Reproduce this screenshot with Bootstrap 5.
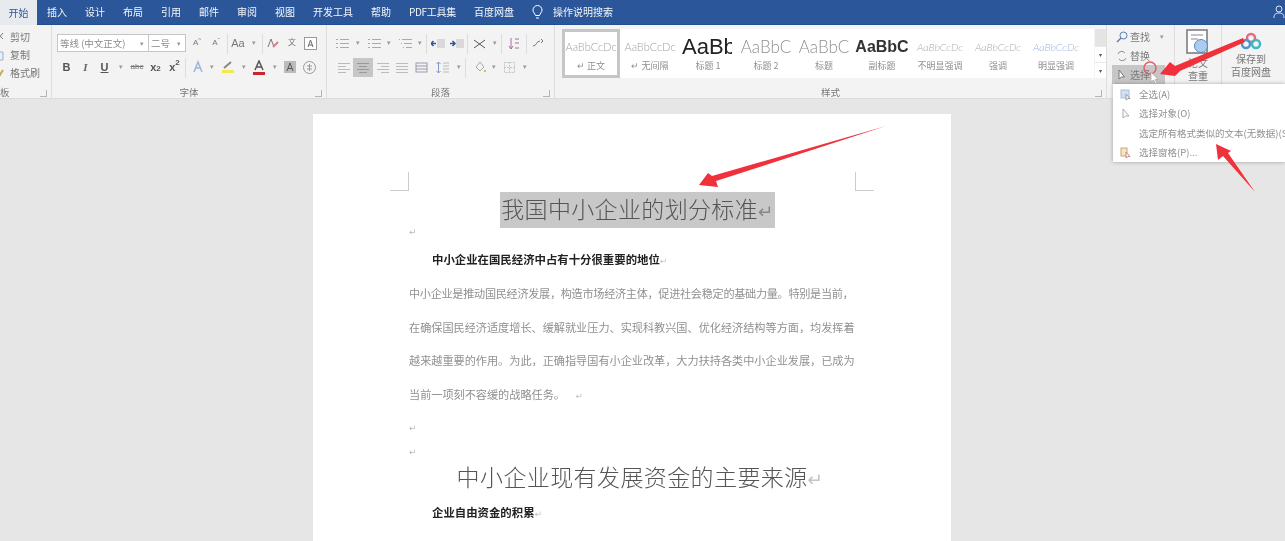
<!DOCTYPE html>
<html lang="zh-CN">
  <head>
    <meta charset="UTF-8" />
    <meta name="viewport" content="width=device-width, initial-scale=1" />
    <title>Word</title>
    <link href="https://cdn.jsdelivr.net/npm/bootstrap@5.3.0/dist/css/bootstrap.min.css" rel="stylesheet" />
    <style>
      html, body { height: 541px; overflow: hidden; }
      body { background: #e6e6e6; font-family: "Noto Sans CJK SC", "Liberation Sans", sans-serif; font-size: 10px; color: #666; position: relative; }
      /* the reference is a soft video frame */
      .tabbar, .ribbon, .docpage, .selmenu { filter: blur(.35px); }

      /* title bar + tabs */
      .tabbar { height: 25px; background: #2b579a; border-bottom: 1px solid #1d4f91; color: #fff; }
      .tabitem { margin-right: 18px; white-space: nowrap; line-height: 24px; opacity: .95; }
      .tabitem-on { width: 37px; height: 25px; background: #f3f3f3; color: #2b579a; text-align: center; line-height: 26px; margin-right: 10px; }
      .tab-tight { letter-spacing: -.3px; }
      .tabbulb { margin: 0 10px 0 0; }
      .tabuser { right: 0; top: 5px; }

      /* ribbon */
      .ribbon { height: 74px; background: #f3f3f3; border-bottom: 1px solid #dcdcdc; }
      .rgroup { border-right: 1px solid #dedede; flex: none; position: relative; }
      .rg-clip { width: 52px; }
      .rg-font { width: 275px; padding-left: 5px; }
      .rg-para { width: 228px; padding-left: 5px; }
      .rg-style { width: 552px; padding-left: 7px; }
      .rg-edit { width: 68px; }
      .rg-check { width: 47px; }
      .rg-disk { width: 58px; border-right: 0; }
      .rlabel { position: absolute; left: 0; right: 0; top: 60px; text-align: center; color: #777; font-size: 9.5px; line-height: 14px; }
      .rexpand { position: absolute; right: 4px; top: 65px; width: 7px; height: 7px; border: 1px solid #b5b5b5; border-top: 0; border-left: 0; }

      .cliprow { height: 18px; line-height: 18px; white-space: nowrap; color: #777; margin-left: -3px; }
      .clipstack { padding-top: 3px; }
      .rrow { height: 18px; }
      .rrow-a { margin-top: 9px; }
      .rrow-b { margin-top: 6px; }
      .combo { height: 18px; background: #fff; border: 1px solid #c6c6c6; color: #8a8a8a; font-size: 9.5px; line-height: 16px; padding-left: 2px; white-space: nowrap; position: relative; }
      .combo-font { width: 92px; }
      .combo-size { width: 38px; margin-left: -1px; }
      .combo-arrow { position: absolute; right: 4px; top: 0; }
      .tb { flex: none; height: 18px; line-height: 18px; text-align: center; color: #777; font-size: 11px; font-family: "Liberation Sans", sans-serif; display: flex; align-items: center; justify-content: center; }
      .tb-10 { width: 10px; } .tb-11 { width: 11px; } .tb-14 { width: 14px; } .tb-16 { width: 16px; } .tb-18 { width: 18px; }
      .tb-19 { width: 19px; } .tb-20 { width: 20px; } .tb-22 { width: 22px; }
      .tb-caret { font-size: 7px; color: #999; }
      .tbbold { font-weight: 700; color: #555; }
      .tbital { font-style: italic; font-weight: 700; color: #666; font-family: "Liberation Serif", serif; }
      .tbsmall { font-size: 8px; }
      .tbdiv { flex: none; width: 1px; height: 20px; background: #dcdcdc; margin: 0 1px; }
      .tb-active { background: #c6c6c6; height: 19px; }
      .spacer-2 { flex: none; width: 2px; }

      /* style gallery */
      .gallery { margin-top: 4px; height: 49px; width: 535px; background: #fff; }
      .gitem { flex: none; width: 58px; height: 49px; text-align: center; overflow: hidden; padding-top: 5px; white-space: nowrap; }
      .gitem-on { border: 3px solid #c6c6c6; padding-top: 2px; margin-right: 1px; }
      .gprev { height: 26px; line-height: 26px; font-family: Lato, "Liberation Sans", sans-serif; font-size: 11px; font-weight: 300; color: #a2a2a2; overflow: hidden; }
      .gname { font-size: 9px; line-height: 12px; color: #8f8f8f; }
      .gp-h1 { font-family: "Liberation Sans", sans-serif; font-weight: 400; font-size: 22px; color: #222; margin-left: 3px; width: 50px; text-align: left; }
      .gp-h2 { font-size: 17px; color: #909090; }
      .gp-sub { font-family: "Liberation Sans", sans-serif; font-size: 16px; color: #333; font-weight: 700; }
      .gp-em { font-style: italic; font-size: 10.5px; color: #aaa; }
      .gp-blue { font-style: italic; font-size: 10.5px; color: #9db4dc; }
      .gscroll { width: 11px; flex: none; margin-left: 1px; }
      .gscroll-top { height: 17px; background: #e4e4e4; }
      .gscroll-btn { height: 16px; background: #fff; border-top: 1px solid #e8e8e8; font-size: 6px; line-height: 15px; text-align: center; color: #555; }

      /* editing */
      .editrow { height: 19px; line-height: 19px; color: #777; margin-left: 5px; width: 53px; padding-left: 4px; white-space: nowrap; gap: 2px; }
      .editrow-on { background: #c6c6c6; }
      .editstack { padding-top: 2px; }
      .bigtext { text-align: center; line-height: 13px; color: #777; font-size: 10px; }
      .diskicon { margin: 7px 0 2px; }

      /* document */
      .docpage { width: 638px; margin: 15px 0 0 313px; height: 427px; overflow: hidden; background: #fff; padding: 78px 96px 0; position: relative; }
      .cropmark { position: absolute; width: 19px; height: 19px; top: 58px; border-bottom: 1px solid #ccc; }
      .crop-l { left: 77px; border-right: 1px solid #ccc; }
      .crop-r { left: 542px; border-left: 1px solid #ccc; }
      .dl { white-space: nowrap; display: block; }
      .dl-title { height: 33px; line-height: 33px; font-size: 23px; text-align: center; color: #555; font-weight: 300; padding-left: 11px; }
      .sel { background: #c8c8c8; display: inline-block; padding: 0 1px; letter-spacing: .35px; }
      .sel .ret { color: #888; }
      .dl-mark { color: #bbb; font-size: 9px; font-family: "DejaVu Sans", sans-serif; }
      .dl-strong { height: 20px; line-height: 20px; font-size: 11.4px; font-weight: 700; color: #222; padding-left: 23px; }
      .dl-body { height: 33.6px; line-height: 33.6px; font-size: 11.15px; color: #909090; }
      .dl-tight { letter-spacing: -.3px; }
      .dl-h2 { height: 34px; line-height: 34px; font-size: 23px; font-weight: 300; color: #555; text-align: center; letter-spacing: .4px; padding-left: 16px; }
      .ret { color: #c4c4c4; font-size: .8em; font-family: "DejaVu Sans", sans-serif; font-weight: 400; }
      .gap-a { height: 14px; line-height: 14px; }
      .mt-a { margin-top: 10px; }
      .mt-b { margin-top: 10px; }
      .mt-c { margin-top: 8px; }
      .mt-d { margin-top: 9px; }

      /* dropdown + overlays */
      .selmenu { position: absolute; left: 1113px; top: 84px; width: 172px; height: 78px; background: #fff; box-shadow: 0 0 4px rgba(0,0,0,.3); padding-top: 1px; z-index: 3; }
      .selitem { height: 19.3px; line-height: 19.3px; color: #909090; font-size: 9.5px; white-space: nowrap; }
      .selicon { flex: none; width: 26px; display: flex; justify-content: center; align-items: center; }
      .arrows { position: absolute; left: 0; top: 0; z-index: 5; filter: blur(.3px); }
    </style>
  </head>
  <body>
    <div class="tabbar d-flex position-relative">
      <div class="tabitem tabitem-on">开始</div>
      <div class="tabitem">插入</div>
      <div class="tabitem">设计</div>
      <div class="tabitem">布局</div>
      <div class="tabitem">引用</div>
      <div class="tabitem">邮件</div>
      <div class="tabitem">审阅</div>
      <div class="tabitem">视图</div>
      <div class="tabitem">开发工具</div>
      <div class="tabitem">帮助</div>
      <div class="tabitem tab-tight">PDF工具集</div>
      <div class="tabitem">百度网盘</div>
      <svg class="tabbulb align-self-center" width="11" height="15" viewBox="0 0 11 15" fill="none" stroke="#fff"><path d="M3.500 10.500C3 8.500 1 7.500 1 5a4.500 4.500 0 0 1 9 0c0 2.500-2 3.500-2.500 5.500zM4 13h3"/></svg>
      <div class="tabitem">操作说明搜索</div>
      <svg class="tabuser position-absolute" width="12" height="14" viewBox="0 0 12 14" fill="none" stroke="#dfe7f3"><circle cx="6" cy="4" r="3"/><path d="M1 13c0-4 2-5 5-5s5 1 5 5"/></svg>
    </div>

    <div class="ribbon d-flex">
      <!-- clipboard -->
      <div class="rgroup rg-clip">
        <div class="clipstack">
          <div class="cliprow d-flex gap-1 align-items-center"><svg width="9" height="11" viewBox="0 0 9 11" fill="none" stroke="#777"><path d="M0 1l6 6M0 8l6-7"/></svg>剪切</div>
          <div class="cliprow d-flex gap-1 align-items-center"><svg width="9" height="11" viewBox="0 0 9 11" fill="#e8f0f8" stroke="#9db4cc"><path d="M0 2h6v8H0z"/></svg>复制</div>
          <div class="cliprow d-flex gap-1 align-items-center"><svg width="9" height="11" viewBox="0 0 9 11" fill="none" stroke="#c9a85a" stroke-width="2"><path d="M1 10L6 2"/></svg>格式刷</div>
        </div>
        <div class="rlabel text-start">板</div>
        <span class="rexpand"></span>
      </div>

      <!-- font -->
      <div class="rgroup rg-font">
        <div class="rrow rrow-a d-flex">
          <div class="combo combo-font">等线 (中文正文)<span class="combo-arrow tb-caret">▾</span></div>
          <div class="combo combo-size">二号<span class="combo-arrow tb-caret">▾</span></div>
          <div class="spacer-2"></div>
          <span class="tb tb-18 tbsmall">A<sup>^</sup></span>
          <span class="tb tb-20 tbsmall">A<sup>ˇ</sup></span>
          <span class="tbdiv"></span>
          <span class="tb tb-18">Aa</span>
          <span class="tb tb-14 tb-caret">▾</span>
          <span class="tbdiv"></span>
          <span class="tb tb-18"><svg width="13" height="12" viewBox="0 0 13 12" fill="none" stroke="#777"><path d="M1 10L4 2l3 8"/><path d="M6 10l5-5" stroke="#e2788c" stroke-width="2"/></svg></span>
          <span class="tb tb-19 tbsmall">文</span>
          <span class="tb tb-19"><svg width="13" height="13" viewBox="0 0 13 13" fill="#fff" stroke="#999"><rect x=".5" y=".5" width="12" height="12"/><path d="M4 10l2.500-7L9 10M5 8h3" fill="none" stroke="#666"/></svg></span>
        </div>
        <div class="rrow rrow-b d-flex">
          <span class="tb tb-19 tbbold">B</span>
          <span class="tb tb-19 tbital">I</span>
          <span class="tb tb-19 tbbold text-decoration-underline">U</span>
          <span class="tb tb-14 tb-caret">▾</span>
          <span class="tb tb-18 tbsmall text-decoration-line-through">abc</span>
          <span class="tb tb-19 tbbold">x<sub class="tbsmall">2</sub></span>
          <span class="tb tb-19 tbbold">x<sup class="tbsmall">2</sup></span>
          <span class="tbdiv"></span>
          <span class="spacer-2"></span>
          <span class="tb tb-18"><svg width="12" height="14" viewBox="0 0 12 14" fill="none" stroke="#9db4dc" stroke-width="1.500"><path d="M2 12L6 2l4 10M3.500 8h5"/></svg></span>
          <span class="tb tb-10 tb-caret">▾</span>
          <span class="tb tb-22"><svg width="14" height="14" viewBox="0 0 14 14"><path d="M3 8l7-6" stroke="#888" stroke-width="2"/><rect x="1" y="10" width="12" height="3" fill="#f4ea4a"/></svg></span>
          <span class="tb tb-10 tb-caret">▾</span>
          <span class="tb tb-20"><svg width="14" height="15" viewBox="0 0 14 15"><path d="M3 10L7 1l4 9M4.500 7h5" fill="none" stroke="#555" stroke-width="1.500"/><rect x="1" y="12" width="12" height="3" fill="#c8262c"/></svg></span>
          <span class="tb tb-11 tb-caret">▾</span>
          <span class="tb tb-20"><svg width="12" height="12" viewBox="0 0 12 12"><rect width="12" height="12" fill="#bbb"/><path d="M3 10l3-8 3 8M4 7.500h4" fill="none" stroke="#555"/></svg></span>
          <span class="tb tb-19"><svg width="13" height="13" viewBox="0 0 13 13" fill="none" stroke="#999"><circle cx="6.500" cy="6.500" r="6"/><path d="M4 5h5M6.500 3v7M4 8h5"/></svg></span>
        </div>
        <div class="rlabel">字体</div>
        <span class="rexpand"></span>
      </div>

      <!-- paragraph -->
      <div class="rgroup rg-para">
        <div class="rrow rrow-a d-flex">
          <span class="spacer-2"></span>
          <span class="tb tb-16"><svg width="13" height="11" viewBox="0 0 13 11" fill="none" stroke="#aaa"><path d="M4 1.500h9M4 5.500h9M4 9.500h9M0 1.500h2M0 5.500h2M0 9.500h2"/></svg></span>
          <span class="tb tb-16 tb-caret">▾</span>
          <span class="tb tb-16"><svg width="13" height="11" viewBox="0 0 13 11" fill="none" stroke="#aaa"><path d="M4 1.500h9M4 5.500h9M4 9.500h9M0 1.500h2M0 5.500h2M0 9.500h2"/></svg></span>
          <span class="tb tb-14 tb-caret">▾</span>
          <span class="tb tb-18"><svg width="13" height="11" viewBox="0 0 13 11" fill="none" stroke="#aaa"><path d="M3 1.500h10M5 5.500h8M7 9.500h6M0 1.500h1M2 5.500h1M4 9.500h1"/></svg></span>
          <span class="tb tb-11 tb-caret">▾</span>
          <span class="tbdiv"></span>
          <span class="tb tb-19"><svg width="14" height="11" viewBox="0 0 14 11"><rect x="6" y="1" width="8" height="9" fill="#d9d9d9"/><path d="M5 5.500H0M2.500 3L0 5.500 2.500 8" fill="none" stroke="#2b579a" stroke-width="1.500"/></svg></span>
          <span class="tb tb-19"><svg width="14" height="11" viewBox="0 0 14 11"><rect x="6" y="1" width="8" height="9" fill="#d9d9d9"/><path d="M0 5.500h5M2.500 3L5 5.500 2.500 8" fill="none" stroke="#2b579a" stroke-width="1.500"/></svg></span>
          <span class="tbdiv"></span>
          <span class="tb tb-20"><svg width="13" height="11" viewBox="0 0 13 11" fill="none" stroke="#555"><path d="M1 2l11 8M12 2L1 10"/></svg></span>
          <span class="tb tb-11 tb-caret">▾</span>
          <span class="tbdiv"></span>
          <span class="tb tb-22"><svg width="12" height="13" viewBox="0 0 12 13" fill="none" stroke="#a36f9e"><path d="M3 1v11M1 9l2 3 2-3M7 2h4M7 11h4M7 6h4"/></svg></span>
          <span class="tbdiv"></span>
          <span class="tb tb-20"><svg width="12" height="10" viewBox="0 0 12 10" fill="none" stroke="#777"><path d="M1 8c4 0 3-5 7-5M9 1l2 2-2 2"/></svg></span>
        </div>
        <div class="rrow rrow-b d-flex">
          <span class="spacer-2"></span>
          <span class="tb tb-19"><svg width="12" height="11" viewBox="0 0 12 11" fill="none" stroke="#bbb"><path d="M0 1.500h12M0 4.500h8M0 7.500h12M0 10.500h8"/></svg></span>
          <span class="tb tb-20 tb-active"><svg width="12" height="11" viewBox="0 0 12 11" fill="none" stroke="#999"><path d="M0 1.500h12M2 4.500h8M0 7.500h12M2 10.500h8"/></svg></span>
          <span class="tb tb-19"><svg width="12" height="11" viewBox="0 0 12 11" fill="none" stroke="#bbb"><path d="M0 1.500h12M4 4.500h8M0 7.500h12M4 10.500h8"/></svg></span>
          <span class="tb tb-19"><svg width="12" height="11" viewBox="0 0 12 11" fill="none" stroke="#bbb"><path d="M0 1.500h12M0 4.500h12M0 7.500h12M0 10.500h12"/></svg></span>
          <span class="tb tb-20"><svg width="13" height="12" viewBox="0 0 13 12" fill="none" stroke="#9a9ab0"><rect x="1" y="2" width="11" height="9"/><path d="M1 5h11M1 8h11"/></svg></span>
          <span class="tb tb-22"><svg width="13" height="13" viewBox="0 0 13 13" fill="none" stroke="#7d9bc8"><path d="M2.500 1v11M.5 3l2-2 2 2M.5 10l2 2 2-2"/><path d="M7 2h6M7 5h6M7 8h6M7 11h6" stroke="#bbb"/></svg></span>
          <span class="tb tb-11 tb-caret">▾</span>
          <span class="tbdiv"></span>
          <span class="spacer-2"></span>
          <span class="tb tb-20"><svg width="13" height="12" viewBox="0 0 13 12" fill="none" stroke="#aaa"><path d="M3 6l4-5 4 5-4 4z"/><path d="M12 9v2" stroke="#e4b84c" stroke-width="2"/></svg></span>
          <span class="tb tb-10 tb-caret">▾</span>
          <span class="tb tb-20"><svg width="11" height="11" viewBox="0 0 11 11" fill="none" stroke="#c4c4c4" stroke-dasharray="2 1"><rect x=".5" y=".5" width="10" height="10"/><path d="M5.500 0v11M0 5.500h11"/></svg></span>
          <span class="tb tb-11 tb-caret">▾</span>
        </div>
        <div class="rlabel">段落</div>
        <span class="rexpand"></span>
      </div>

      <!-- styles -->
      <div class="rgroup rg-style">
        <div class="d-flex">
          <div class="gallery d-flex">
            <div class="gitem gitem-on"><div class="gprev">AaBbCcDc</div><div class="gname">↵ 正文</div></div>
            <div class="gitem"><div class="gprev">AaBbCcDc</div><div class="gname">↵ 无间隔</div></div>
            <div class="gitem"><div class="gprev gp-h1">AaBb</div><div class="gname">标题 1</div></div>
            <div class="gitem"><div class="gprev gp-h2">AaBbC</div><div class="gname">标题 2</div></div>
            <div class="gitem"><div class="gprev gp-h2">AaBbC</div><div class="gname">标题</div></div>
            <div class="gitem"><div class="gprev gp-sub">AaBbC</div><div class="gname">副标题</div></div>
            <div class="gitem"><div class="gprev gp-em">AaBbCcDc</div><div class="gname">不明显强调</div></div>
            <div class="gitem"><div class="gprev gp-em">AaBbCcDc</div><div class="gname">强调</div></div>
            <div class="gitem"><div class="gprev gp-blue">AaBbCcDc</div><div class="gname">明显强调</div></div>
          </div>
          <div class="gscroll mt-1">
            <div class="gscroll-top"></div>
            <div class="gscroll-btn">▾</div>
            <div class="gscroll-btn">▾</div>
          </div>
        </div>
        <div class="rlabel">样式</div>
        <span class="rexpand"></span>
      </div>

      <!-- editing -->
      <div class="rgroup rg-edit">
        <div class="editstack">
          <div class="editrow d-flex align-items-center"><svg width="12" height="12" viewBox="0 0 12 12" fill="none" stroke="#5a7fae"><circle cx="7.500" cy="4.500" r="3.500"/><path d="M5 7l-4 4" stroke-width="1.500"/></svg>查找<span class="tb-caret ms-2">▾</span></div>
          <div class="editrow d-flex align-items-center"><svg width="12" height="12" viewBox="0 0 12 12" fill="none" stroke="#8a8a8a"><path d="M2 4a4 4 0 0 1 7-1M10 8a4 4 0 0 1-7 1"/></svg>替换</div>
          <div class="editrow editrow-on d-flex align-items-center"><svg width="12" height="12" viewBox="0 0 12 12" fill="#fff" stroke="#777"><path d="M3 1v9l2.500-2 3 0z"/></svg>选择</div>
        </div>
      </div>

      <div class="rgroup rg-check d-flex flex-column align-items-center">
        <svg class="mt-1" width="24" height="27" viewBox="0 0 24 27"><rect x="1" y="1" width="20" height="23" fill="#fff" stroke="#777" stroke-width="1.500"/><path d="M5 6h12M5 10h7" stroke="#888"/><circle cx="15" cy="17" r="6.500" fill="#a9cdee" stroke="#5a88b8"/></svg>
        <div class="bigtext">论文<br />查重</div>
      </div>

      <div class="rgroup rg-disk d-flex flex-column align-items-center">
        <svg class="diskicon" width="22" height="18" viewBox="0 0 22 18" fill="none" stroke-width="2.500"><circle cx="11" cy="6" r="4" stroke="#e36a80"/><circle cx="6" cy="12" r="4" stroke="#4a9ad0"/><circle cx="16" cy="12" r="4" stroke="#3fb8c4"/></svg>
        <div class="bigtext">保存到<br />百度网盘</div>
      </div>
    </div>

    <!-- document page -->
    <div class="docpage">
      <span class="cropmark crop-l"></span>
      <span class="cropmark crop-r"></span>
      <div class="dl dl-title"><span class="sel">我国中小企业的划分标准<span class="ret">↵</span></span></div>
      <div class="dl dl-mark gap-a">↵</div>
      <div class="dl dl-strong mt-a">中小企业在国民经济中占有十分很重要的地位<span class="ret">↵</span></div>
      <div class="dl dl-body dl-tight mt-c">中小企业是推动国民经济发展，构造市场经济主体，促进社会稳定的基础力量。特别是当前，</div>
      <div class="dl dl-body">在确保国民经济适度增长、缓解就业压力、实现科教兴国、优化经济结构等方面，均发挥着</div>
      <div class="dl dl-body">越来越重要的作用。为此，正确指导国有小企业改革，大力扶持各类中小企业发展，已成为</div>
      <div class="dl dl-body">当前一项刻不容缓的战略任务。 <span class="ret ms-2">↵</span></div>
      <div class="dl dl-mark gap-a mt-b">↵</div>
      <div class="dl dl-mark gap-a mt-b">↵</div>
      <div class="dl dl-h2">中小企业现有发展资金的主要来源<span class="ret">↵</span></div>
      <div class="dl dl-strong mt-d">企业自由资金的积累<span class="ret">↵</span></div>
      <div class="dl dl-body mt-b">中小企业具有灵活创业、资金划到的需要帮助，有些规模化，可以经济增长，划分创新与</div>
    </div>

    <!-- select dropdown -->
    <div class="selmenu">
      <div class="selitem d-flex"><span class="selicon"><svg width="12" height="12" viewBox="0 0 12 12" fill="#cfe0f2" stroke="#a9c0d8"><rect x="1" y="1" width="8" height="8"/><path d="M6 5v6l2-1.500 2 0z" fill="#fff" stroke="#999"/></svg></span>全选(A)</div>
      <div class="selitem d-flex"><span class="selicon"><svg width="10" height="12" viewBox="0 0 10 12" fill="#fff" stroke="#aaa"><path d="M2 1v9l2.500-2 3.500 0z"/></svg></span>选择对象(O)</div>
      <div class="selitem d-flex"><span class="selicon"></span>选定所有格式类似的文本(无数据)(S)</div>
      <div class="selitem d-flex"><span class="selicon"><svg width="12" height="12" viewBox="0 0 12 12" fill="#f4e6c8" stroke="#c9a86a"><rect x="1" y="1" width="6" height="8"/><path d="M6 5v6l2-1.500 2 0z" fill="#fff" stroke="#c88"/></svg></span>选择窗格(P)...</div>
    </div>

    <!-- annotations drawn over the screenshot -->
    <svg class="arrows" width="1285" height="541" viewBox="0 0 1285 541">
      <g fill="#f0303a">
        <polygon points="886,126 712,176 708,173 699,185 718,187 716,181" />
        <polygon points="1243,38 1245,42 1180,71 1175,76 1160,74 1170,62 1175,66" />
        <polygon points="1255,192 1223,156 1218,160 1216,144 1231,151 1228,153" />
      </g>
      <circle cx="1150" cy="68" r="6" fill="none" stroke="#e0606c" stroke-width="1.500" />
      <path d="M1151 72v10l2.500-2 2.500 4 1-1-2-3.500h3z" fill="#fff" stroke="#999" stroke-width=".6" />
    </svg>

    <script src="https://cdn.jsdelivr.net/npm/bootstrap@5.3.0/dist/js/bootstrap.bundle.min.js"></script>
  </body>
</html>
